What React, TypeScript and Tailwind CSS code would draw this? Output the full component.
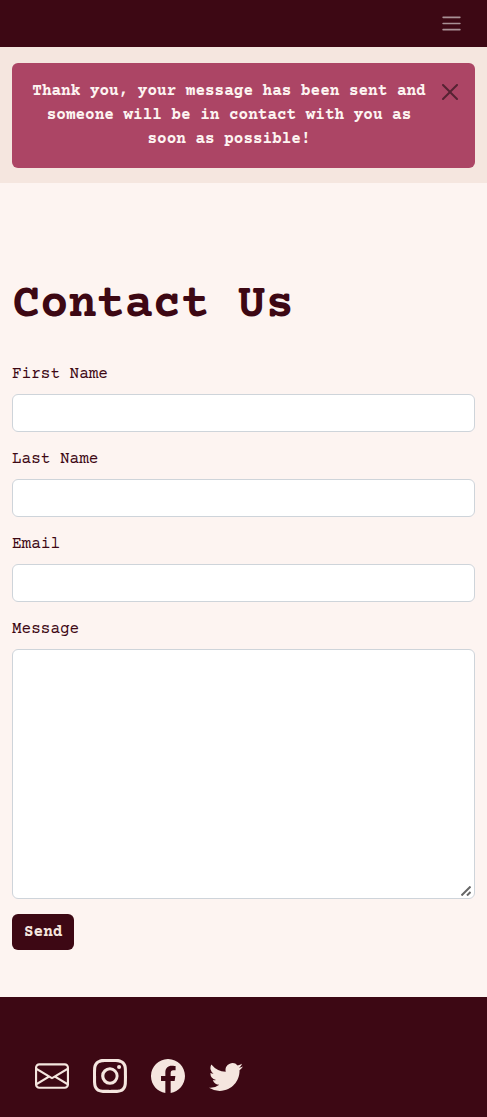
import { useState } from "react";
import { BsEnvelope, BsFacebook, BsInstagram, BsTwitter } from "react-icons/bs";

const fields = [
  { id: "first-name", label: "First Name", type: "text" },
  { id: "last-name", label: "Last Name", type: "text" },
  { id: "email", label: "Email", type: "email" },
];

const socials = [
  { name: "Email", Icon: BsEnvelope },
  { name: "Instagram", Icon: BsInstagram },
  { name: "Facebook", Icon: BsFacebook },
  { name: "Twitter", Icon: BsTwitter },
];

function Navbar() {
  return (
    <nav className="flex justify-end bg-[#3d0814] px-6 py-3">
      <button type="button" aria-label="Toggle navigation" className="text-white/55">
        <svg viewBox="0 0 30 30" className="size-[23px]" fill="none" stroke="currentColor" strokeWidth="2" strokeLinecap="round" strokeMiterlimit="10">
          <path d="M4 7h22M4 15h22M4 23h22" />
        </svg>
      </button>
    </nav>
  );
}

function Notice({ onClose }: { onClose: () => void }) {
  return (
    <section className="bg-[#f5e6df] px-3 pt-4 pb-[15px]">
      <div role="alert" className="flex items-start rounded-md bg-[#ac4565] px-4 pt-4 pb-[17px] text-[#fdf4f1]">
        <p className="flex-1 text-center font-bold">
          Thank you, your message has been sent and someone will be in contact with you as soon as possible!
        </p>
        <button type="button" aria-label="Close" onClick={onClose} className="mx-px mt-[5px] ml-3 text-black/50">
          <svg viewBox="0 0 16 16" className="size-4" fill="currentColor">
            <path d="M.293.293a1 1 0 0 1 1.414 0L8 6.586 14.293.293a1 1 0 1 1 1.414 1.414L9.414 8l6.293 6.293a1 1 0 0 1-1.414 1.414L8 9.414l-6.293 6.293a1 1 0 0 1-1.414-1.414L6.586 8 .293 1.707a1 1 0 0 1 0-1.414z" />
          </svg>
        </button>
      </div>
    </section>
  );
}

export default function App() {
  const [showNotice, setShowNotice] = useState(true);
  const control = "w-full rounded-md border border-[#ced4da] bg-white px-3 py-2";

  return (
    <div className="flex min-h-screen flex-col bg-[#fdf4f1] font-['Courier_Prime','Liberation_Mono',monospace] text-base text-[#3d0814]">
      <Navbar />
      {showNotice && <Notice onClose={() => setShowNotice(false)} />}
      <main className="px-3 pt-[95px] pb-[47px]">
        <h1 className="text-[47px] leading-[56px] font-bold">Contact Us</h1>
        <form className="mt-7" onSubmit={(e) => e.preventDefault()}>
          {fields.map(({ id, label, type }) => (
            <div key={id} className="mb-[15px]">
              <label htmlFor={id} className="mb-2 block">{label}</label>
              <input id={id} type={type} className={`block h-[38px] ${control}`} />
            </div>
          ))}
          <label htmlFor="message" className="mb-2 block">Message</label>
          <div className="relative mb-[15px]">
            <textarea
              id="message"
              className={`block h-[250px] resize-y [&::-webkit-resizer]:bg-transparent ${control}`}
            />
            <svg viewBox="0 0 10 10" aria-hidden="true" className="pointer-events-none absolute right-1 bottom-[3px] size-2.5" fill="none" stroke="#666" strokeWidth="2">
              <path d="M.5 9.5l9-9M6 9.5l3.5-3.5" />
            </svg>
          </div>
          <button type="submit" className="block rounded-md bg-[#3d0814] px-3 py-1.5 font-bold text-[#f5e6df]">Send</button>
        </form>
      </main>
      <footer className="flex flex-1 items-start gap-6 bg-[#3d0814] px-[35px] pt-[62px] pb-5 text-[#f5e6df]">
        {socials.map(({ name, Icon }) => (
          <a key={name} href="#" aria-label={name}>
            <Icon className="size-[34px]" />
          </a>
        ))}
      </footer>
    </div>
  );
}
